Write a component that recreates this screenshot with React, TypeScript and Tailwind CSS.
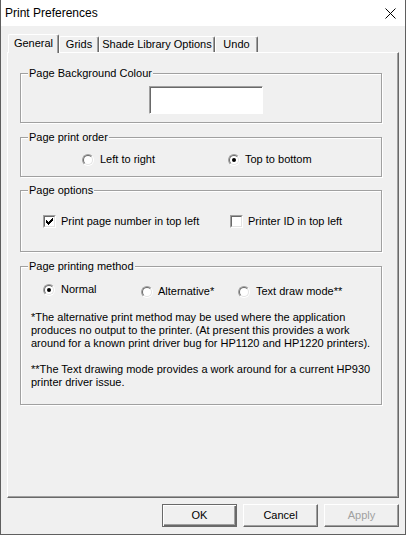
import React from 'react';

function Radio({ checked }: { checked?: boolean }) {
  return (
    <div className="w-[12px] h-[12px] rounded-full border border-t-[#a0a0a0] border-l-[#a0a0a0] border-r-white border-b-white shrink-0">
      <div className="w-full h-full rounded-full border border-t-[#696969] border-l-[#696969] border-r-[#e3e3e3] border-b-[#e3e3e3] bg-white flex items-center justify-center">
        {checked && <div className="w-[4px] h-[4px] rounded-full bg-black" />}
      </div>
    </div>
  );
}

function Check({ checked }: { checked?: boolean }) {
  return (
    <div className="w-[13px] h-[13px] border border-t-[#a0a0a0] border-l-[#a0a0a0] border-r-white border-b-white shrink-0">
      <div className="w-full h-full border border-t-[#696969] border-l-[#696969] border-r-[#e3e3e3] border-b-[#e3e3e3] bg-white">
        {checked && (
          <svg width="9" height="9" viewBox="0 0 9 9" className="block">
            <path d="M1.5 3.5 L3.5 5.5 L7.5 1.5 M1.5 4.5 L3.5 6.5 L7.5 2.5 M1.5 5.5 L3.5 7.5 L7.5 3.5" stroke="#000" strokeWidth="1" fill="none" shapeRendering="crispEdges" />
          </svg>
        )}
      </div>
    </div>
  );
}

function Group({ label, className, children }: { label: string; className?: string; children: React.ReactNode }) {
  return (
    <fieldset className={`ml-[12px] w-[362px] border border-[#a0a0a0] shadow-[inset_1px_1px_0_#fff,1px_1px_0_#fff] ${className ?? ''}`}>
      <legend className="ml-[7px] px-[1px] bg-[#f0f0f0] leading-[13px]">{label}</legend>
      {children}
    </fieldset>
  );
}

export default function App() {
  return (
    <div className="w-[406px] h-[535px] bg-[#f0f0f0] border-l border-r border-b border-[#5f5f5f] flex flex-col font-['Liberation_Sans',Arial,sans-serif] text-[11px] leading-[13px] text-black overflow-hidden">
      {/* Title bar */}
      <div className="h-[26px] bg-white flex items-center justify-between pl-[4px] pr-[9px] shrink-0">
        <span className="text-[12px]">Print Preferences</span>
        <svg width="11" height="11" viewBox="0 0 11 11">
          <path d="M0.5 0.5 L10.5 10.5 M10.5 0.5 L0.5 10.5" stroke="#000" strokeWidth="1" />
        </svg>
      </div>

      {/* Tabs */}
      <div className="mt-[8px] ml-[6px] h-[18px] flex items-end relative z-10">
        <div className="ml-[1px] w-[51px] h-[19px] -mb-[1px] bg-[#f0f0f0] border-t border-l border-white border-r border-r-[#696969] rounded-t-[2px] shadow-[inset_-1px_0_0_#a0a0a0] flex items-start justify-center pt-[2px]">
          General
        </div>
        <div className="w-[40px] h-[16px] border-t border-l border-white border-r border-r-[#696969] rounded-t-[2px] shadow-[inset_-1px_0_0_#a0a0a0] flex items-start justify-center pt-[1px]">
          Grids
        </div>
        <div className="w-[116px] h-[16px] border-t border-l border-white border-r border-r-[#696969] rounded-t-[2px] shadow-[inset_-1px_0_0_#a0a0a0] flex items-start justify-center pt-[1px]">
          Shade Library Options
        </div>
        <div className="w-[43px] h-[16px] border-t border-l border-white border-r border-r-[#696969] rounded-t-[2px] shadow-[inset_-1px_0_0_#a0a0a0] flex items-start justify-center pt-[1px]">
          Undo
        </div>
      </div>

      {/* Tab panel */}
      <div className="ml-[6px] w-[392px] h-[446px] border border-t-white border-l-white border-r-[#696969] border-b-[#696969] shadow-[inset_-1px_-1px_0_#a0a0a0] flex flex-col shrink-0">
        <Group label="Page Background Colour" className="mt-[14px] pt-[6px] pb-[8px]">
          <div className="ml-[128px] w-[114px] h-[28px] bg-white border border-t-[#a0a0a0] border-l-[#a0a0a0] border-r-white border-b-white shadow-[inset_1px_1px_0_#696969]" />
        </Group>

        <Group label="Page print order" className="mt-[8px] pt-[9px] pb-[10px]">
          <div className="flex items-center h-[13px] ml-[61px]">
            <div className="w-[146px] flex items-center gap-[6px]">
              <Radio />
              <span>Left to right</span>
            </div>
            <div className="flex items-center gap-[5px]">
              <Radio checked />
              <span>Top to bottom</span>
            </div>
          </div>
        </Group>

        <Group label="Page options" className="mt-[7px] pt-[18px] pb-[23px]">
          <div className="flex items-center h-[13px] ml-[22px]">
            <div className="w-[187px] flex items-center gap-[5px]">
              <Check checked />
              <span>Print page number in top left</span>
            </div>
            <div className="flex items-center gap-[5px]">
              <Check />
              <span>Printer ID in top left</span>
            </div>
          </div>
        </Group>

        <Group label="Page printing method" className="mt-[8px] pt-[10px] pb-[15px]">
          <div className="flex items-start h-[15px] ml-[22px]">
            <div className="w-[98px] flex items-center gap-[6px]">
              <Radio checked />
              <span>Normal</span>
            </div>
            <div className="w-[97px] mt-[2px] flex items-center gap-[5px]">
              <Radio />
              <span>Alternative*</span>
            </div>
            <div className="mt-[2px] flex items-center gap-[6px]">
              <Radio />
              <span>Text draw mode**</span>
            </div>
          </div>
          <p className="mt-[13px] ml-[10px] whitespace-nowrap">
            *The alternative print method may be used where the application
            <br />
            produces no output to the printer. (At present this provides a work
            <br />
            around for a known print driver bug for HP1120 and HP1220 printers).
            <br />
            <br />
            **The Text drawing mode provides a work around for a current HP930
            <br />
            printer driver issue.
          </p>
        </Group>
      </div>

      {/* Buttons */}
      <div className="mt-[6px] flex justify-end gap-[6px] pr-[6px]">
        <button className="w-[75px] h-[23px] border border-[#696969] shadow-[inset_1px_1px_0_#fff,inset_-1px_-1px_0_#696969,inset_-2px_-2px_0_#a0a0a0] bg-[#f0f0f0]">
          OK
        </button>
        <button className="w-[75px] h-[23px] border border-t-white border-l-white border-r-[#696969] border-b-[#696969] shadow-[inset_-1px_-1px_0_#a0a0a0] bg-[#f0f0f0]">
          Cancel
        </button>
        <button className="w-[75px] h-[23px] border border-t-white border-l-white border-r-[#696969] border-b-[#696969] shadow-[inset_-1px_-1px_0_#a0a0a0] bg-[#f0f0f0] text-[#a0a0a0]">
          Apply
        </button>
      </div>
    </div>
  );
}
